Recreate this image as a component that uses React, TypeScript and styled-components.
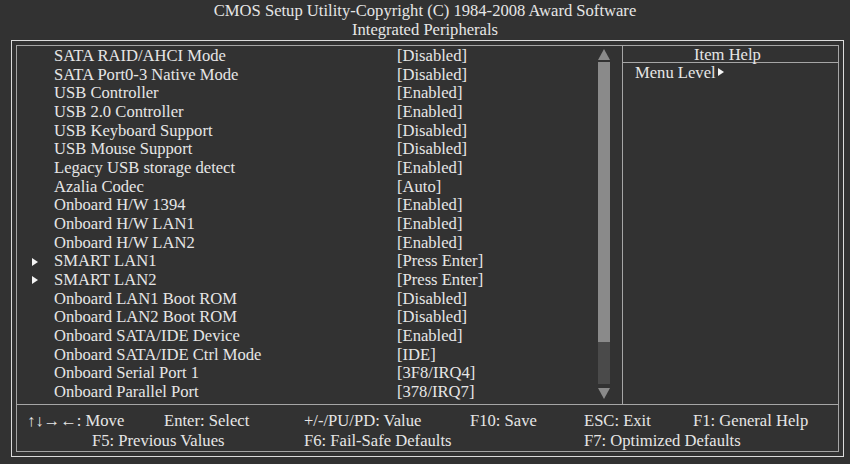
import styled, { createGlobalStyle } from 'styled-components';

const GlobalStyle = createGlobalStyle`
  html, body {
    margin: 0;
    padding: 0;
    background: #323232;
  }
  body {
    font-family: "Liberation Serif", "Times New Roman", serif;
    color: #e6e6e6;
  }
`;

const Screen = styled.div`
  width: 850px;
  height: 464px;
  background: #323232;
  overflow: hidden;
  font-size: 16.6px;
`;

const Header = styled.header`
  height: 40px;
  display: flex;
  flex-direction: column;
  align-items: center;
  padding-top: 1px;
  box-sizing: border-box;
  line-height: 19px;
`;

const OuterFrame = styled.div`
  margin-left: 11px;
  width: 833px;
  height: 417px;
  box-sizing: border-box;
  border: 1px solid #dcdcdc;
  padding: 4px;
`;

const InnerFrame = styled.div`
  height: 100%;
  box-sizing: border-box;
  border: 1px solid #a6a6a6;
  display: flex;
  flex-direction: column;
`;

const Body = styled.div`
  height: 358px;
  display: flex;
  border-bottom: 1px solid #a6a6a6;
`;

const MainPanel = styled.section`
  width: 605px;
  display: flex;
  border-right: 1px solid #a6a6a6;
`;

const Rows = styled.div`
  flex: 1;
  padding-top: 1px;
`;

const Row = styled.div`
  height: 18.67px;
  line-height: 18.67px;
  display: flex;
  align-items: center;
  white-space: nowrap;
`;

const Marker = styled.span<{ $show: boolean }>`
  width: 37px;
  display: flex;
  justify-content: flex-end;
  &::before {
    content: '';
    display: ${p => (p.$show ? 'block' : 'none')};
    margin-right: 16px;
    border-left: 6px solid #f4f4f4;
    border-top: 4.5px solid transparent;
    border-bottom: 4.5px solid transparent;
  }
`;

const Label = styled.span`
  width: 343px;
`;

const Value = styled.span``;

const ScrollBar = styled.div`
  width: 12px;
  margin-right: 12px;
  display: flex;
  flex-direction: column;
  align-items: center;
  padding-top: 3px;
`;

const Arrow = styled.div<{ $down?: boolean }>`
  width: 0;
  height: 0;
  border-left: 6px solid transparent;
  border-right: 6px solid transparent;
  ${p =>
    p.$down
      ? 'border-top: 11px solid #8a8a8a; margin-top: 4px;'
      : 'border-bottom: 11px solid #8a8a8a; margin-bottom: 2px;'}
`;

const Track = styled.div`
  width: 12px;
  height: 322px;
  background: #4a4a4a;
  display: flex;
  flex-direction: column;
`;

const Thumb = styled.div`
  height: 280px;
  background: #8a8a8a;
`;

const HelpPanel = styled.aside`
  flex: 1;
  display: flex;
  flex-direction: column;
`;

const HelpTitle = styled.div`
  height: 16px;
  line-height: 17px;
  text-align: center;
  border-bottom: 1px solid #a6a6a6;
  padding-right: 6px;
`;

const HelpText = styled.div`
  padding: 1px 0 0 12px;
  line-height: 17px;
  display: flex;
  align-items: center;
  &::after {
    content: '';
    margin: 0 0 1px 2px;
    border-left: 6px solid #f4f4f4;
    border-top: 4.5px solid transparent;
    border-bottom: 4.5px solid transparent;
  }
`;

const Footer = styled.footer`
  flex: 1;
  display: grid;
  grid-template-columns: 137px 140px 166px 114px 109px 1fr;
  grid-auto-rows: 20px;
  padding: 6px 0 0 10px;
  line-height: 20px;
  white-space: nowrap;
`;

const Key = styled.span<{ $span?: number; $indent?: number }>`
  grid-column: span ${p => p.$span ?? 1};
  padding-left: ${p => p.$indent ?? 0}px;
`;

const items: [string, string, boolean?][] = [
  ['SATA RAID/AHCI Mode', '[Disabled]'],
  ['SATA Port0-3 Native Mode', '[Disabled]'],
  ['USB Controller', '[Enabled]'],
  ['USB 2.0 Controller', '[Enabled]'],
  ['USB Keyboard Support', '[Disabled]'],
  ['USB Mouse Support', '[Disabled]'],
  ['Legacy USB storage detect', '[Enabled]'],
  ['Azalia Codec', '[Auto]'],
  ['Onboard H/W 1394', '[Enabled]'],
  ['Onboard H/W LAN1', '[Enabled]'],
  ['Onboard H/W LAN2', '[Enabled]'],
  ['SMART LAN1', '[Press Enter]', true],
  ['SMART LAN2', '[Press Enter]', true],
  ['Onboard LAN1 Boot ROM', '[Disabled]'],
  ['Onboard LAN2 Boot ROM', '[Disabled]'],
  ['Onboard SATA/IDE Device', '[Enabled]'],
  ['Onboard SATA/IDE Ctrl Mode', '[IDE]'],
  ['Onboard Serial Port 1', '[3F8/IRQ4]'],
  ['Onboard Parallel Port', '[378/IRQ7]'],
];

export default function App() {
  return (
    <Screen>
      <GlobalStyle />
      <Header>
        <div>CMOS Setup Utility-Copyright (C) 1984-2008 Award Software</div>
        <div>Integrated Peripherals</div>
      </Header>
      <OuterFrame>
        <InnerFrame>
          <Body>
            <MainPanel>
              <Rows>
                {items.map(([label, value, sub]) => (
                  <Row key={label}>
                    <Marker $show={!!sub} />
                    <Label>{label}</Label>
                    <Value>{value}</Value>
                  </Row>
                ))}
              </Rows>
              <ScrollBar>
                <Arrow />
                <Track>
                  <Thumb />
                </Track>
                <Arrow $down />
              </ScrollBar>
            </MainPanel>
            <HelpPanel>
              <HelpTitle>Item Help</HelpTitle>
              <HelpText>Menu Level</HelpText>
            </HelpPanel>
          </Body>
          <Footer>
            <Key>↑↓→←: Move</Key>
            <Key>Enter: Select</Key>
            <Key>+/-/PU/PD: Value</Key>
            <Key>F10: Save</Key>
            <Key>ESC: Exit</Key>
            <Key>F1: General Help</Key>
            <Key $span={2} $indent={65}>F5: Previous Values</Key>
            <Key $span={2}>F6: Fail-Safe Defaults</Key>
            <Key $span={2}>F7: Optimized Defaults</Key>
          </Footer>
        </InnerFrame>
      </OuterFrame>
    </Screen>
  );
}
